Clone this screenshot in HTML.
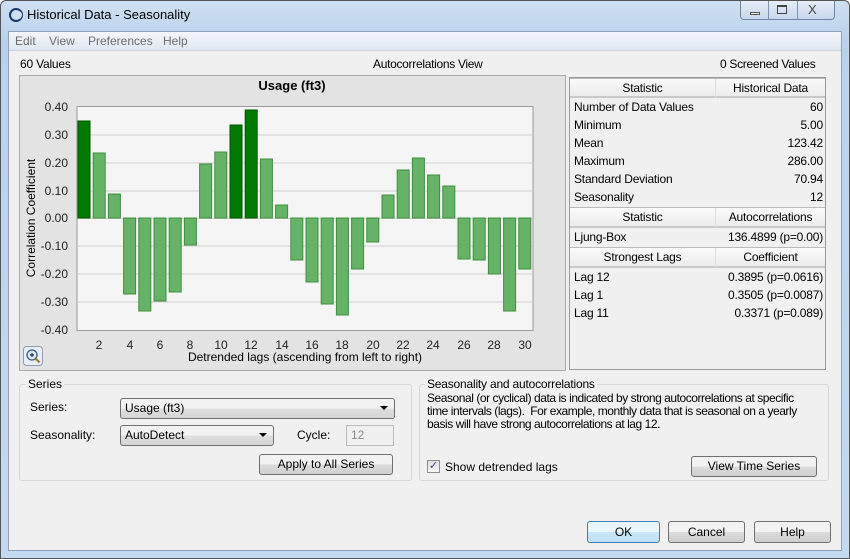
<!DOCTYPE html>
<html><head><meta charset="utf-8"><style>
*{margin:0;padding:0;box-sizing:border-box}
body{width:850px;height:559px;overflow:hidden;font-family:"Liberation Sans",sans-serif;font-size:12px;color:#000;background:#fff;position:relative}
.abs{position:absolute}
.win{left:0;top:0;width:850px;height:559px;background:linear-gradient(#cfe0f3,#b9d1ea 40px,#c4d9ef);border:1px solid #555;border-radius:6px 6px 0 0}
.client{left:8px;top:31px;width:834px;height:520px;background:#f0f0f0;border:1px solid #8aa2bd}
.menu{left:9px;top:32px;width:832px;height:19px;background:linear-gradient(#f3f6fa,#dfe7f1);border-bottom:1px solid #c8d3e0;color:#6d6d6d;font-size:12px}
.menu span{position:absolute;top:2px}
.tbl{left:569px;top:77px;width:257px;height:293px;background:#f0f0f0;border:1px solid #999}
.row{position:absolute;left:0;width:255px;height:18px;font-size:12px;line-height:18px;letter-spacing:-0.2px}
.row .l{position:absolute;left:4px}
.row .r{position:absolute;right:2px}
.hdr{background:linear-gradient(#fafafa,#ececec);border-bottom:2px solid #c9c9c9;border-top:1px solid #bbb}
.hdr .c1{position:absolute;left:0;width:145px;text-align:center}
.hdr .c2{position:absolute;left:145px;width:110px;text-align:center;border-left:1px solid #ddd}
.grp{border:1px solid #d8d8d8;border-radius:3px}
.btn{position:absolute;border:1px solid #707070;border-radius:3px;background:linear-gradient(#f2f2f2 50%,#dcdcdc 50%,#cfcfcf);text-align:center;font-size:12px}
.combo{position:absolute;border:1px solid #707070;border-radius:3px;background:linear-gradient(#f2f2f2 50%,#e0e0e0 50%,#d4d4d4);font-size:12px;padding-left:4px;line-height:18px}
.combo:after{content:"";position:absolute;right:6px;top:7px;border-left:4px solid transparent;border-right:4px solid transparent;border-top:4px solid #000}
</style></head><body>
<div class="abs win"></div>
<svg class="abs" style="left:8px;top:7px" width="16" height="16"><circle cx="8" cy="8" r="6" fill="none" stroke="#1a3a6a" stroke-width="2"/><circle cx="9.5" cy="8" r="4.5" fill="#cfe0f3"/></svg>
<div class="abs" style="left:27px;top:7px;font-size:13px">Historical Data - Seasonality</div>
<div class="abs" style="left:740px;top:1px;width:95px;height:19px;border:1px solid #6d83a0;border-top:none;border-radius:0 0 4px 4px;background:linear-gradient(#e6eef8,#c7d7ea)"></div>
<div class="abs" style="left:768px;top:1px;width:1px;height:19px;background:#7d92ae"></div>
<div class="abs" style="left:797px;top:1px;width:1px;height:19px;background:#7d92ae"></div>
<div class="abs" style="left:750px;top:12px;width:10px;height:3px;border:1px solid #555;background:#fff"></div>
<div class="abs" style="left:777px;top:5px;width:10px;height:9px;border:1px solid #444;border-top-width:2px"></div>
<div class="abs" style="left:808px;top:2px;font-size:13px;color:#444">X</div>
<div class="abs client"></div>
<div class="abs menu"><span style="left:6px">Edit</span><span style="left:40px">View</span><span style="left:79px">Preferences</span><span style="left:154px">Help</span></div>
<div class="abs" style="left:20px;top:57px;letter-spacing:-0.2px">60 Values</div>
<div class="abs" style="left:373px;top:57px;letter-spacing:-0.3px">Autocorrelations View</div>
<div class="abs" style="left:720px;top:57px;letter-spacing:-0.3px">0 Screened Values</div>

<div class="abs" style="left:19px;top:75px;width:547px;height:296px;background:#e3e3e3;border:1px solid #aaa"></div>
<svg class="abs" style="left:0;top:0" width="850" height="559" font-family="Liberation Sans,sans-serif">
<text x="292" y="90" font-size="13" font-weight="bold" text-anchor="middle">Usage (ft3)</text>
<rect x="77" y="106.5" width="456" height="224" fill="#f5f5f5" stroke="#999"/>
<g stroke="#d0d0d0"><line x1="78" x2="532" y1="135" y2="135"/><line x1="78" x2="532" y1="163" y2="163"/><line x1="78" x2="532" y1="191" y2="191"/><line x1="78" x2="532" y1="218.5" y2="218.5"/><line x1="78" x2="532" y1="246" y2="246"/><line x1="78" x2="532" y1="274" y2="274"/><line x1="78" x2="532" y1="302" y2="302"/></g>
<g font-size="12" fill="#222" text-anchor="end"><text x="68" y="111">0.40</text><text x="68" y="139">0.30</text><text x="68" y="167">0.20</text><text x="68" y="195">0.10</text><text x="68" y="222">0.00</text><text x="68" y="250">-0.10</text><text x="68" y="278">-0.20</text><text x="68" y="306">-0.30</text><text x="68" y="334">-0.40</text></g>
<text transform="translate(35,218) rotate(-90)" font-size="12" text-anchor="middle">Correlation Coefficient</text>
<g fill="#66b266" stroke="#3f8f3f">
<rect x="93.2" y="153" width="12" height="65"/><rect x="108.4" y="194" width="12" height="24"/>
<rect x="123.6" y="218" width="12" height="76"/><rect x="138.8" y="218" width="12" height="93"/><rect x="154" y="218" width="12" height="83"/><rect x="169.2" y="218" width="12" height="74"/><rect x="184.4" y="218" width="12" height="27"/>
<rect x="199.6" y="164" width="12" height="54"/><rect x="214.8" y="152" width="12" height="66"/>
<rect x="260.4" y="159" width="12" height="59"/><rect x="275.6" y="205" width="12" height="13"/>
<rect x="290.8" y="218" width="12" height="42"/><rect x="306" y="218" width="12" height="64"/><rect x="321.2" y="218" width="12" height="86"/><rect x="336.4" y="218" width="12" height="97"/><rect x="351.6" y="218" width="12" height="51"/><rect x="366.8" y="218" width="12" height="24"/>
<rect x="382" y="195" width="12" height="23"/><rect x="397.2" y="170" width="12" height="48"/><rect x="412.4" y="158" width="12" height="60"/><rect x="427.6" y="175" width="12" height="43"/><rect x="442.8" y="186" width="12" height="32"/>
<rect x="458" y="218" width="12" height="41"/><rect x="473.2" y="218" width="12" height="42"/><rect x="488.4" y="218" width="12" height="56"/><rect x="503.6" y="218" width="12" height="93"/><rect x="518.8" y="218" width="12" height="51"/>
</g>
<g fill="#007a00" stroke="#005500"><rect x="78" y="121" width="12" height="97"/><rect x="230" y="125" width="12" height="93"/><rect x="245.2" y="110" width="12" height="108"/></g>
<g font-size="12" fill="#222" text-anchor="middle"><text x="99" y="349">2</text><text x="130" y="349">4</text><text x="160" y="349">6</text><text x="190" y="349">8</text><text x="221" y="349">10</text><text x="251" y="349">12</text><text x="282" y="349">14</text><text x="312" y="349">16</text><text x="342" y="349">18</text><text x="373" y="349">20</text><text x="403" y="349">22</text><text x="433" y="349">24</text><text x="464" y="349">26</text><text x="494" y="349">28</text><text x="525" y="349">30</text></g>
<text x="305" y="361" font-size="12" text-anchor="middle">Detrended lags (ascending from left to right)</text>
<rect x="23.5" y="346.5" width="19" height="19" rx="3" fill="#e8eef5" stroke="#8a9ab0"/>
<circle cx="32" cy="355" r="5" fill="#dbe8f7" stroke="#3a5a8a" stroke-width="1.3"/><path d="M30 355h4M32 353v4" stroke="#234" stroke-width="1.2"/><path d="M35.5 358.5l4 4" stroke="#a67a2a" stroke-width="2.2"/>
</svg>

<div class="abs tbl">
<div class="row hdr" style="top:0;height:20px;line-height:19px"><span class="c1">Statistic</span><span class="c2">Historical Data</span></div>
<div class="row" style="top:20px"><span class="l">Number of Data Values</span><span class="r">60</span></div>
<div class="row" style="top:38px"><span class="l">Minimum</span><span class="r">5.00</span></div>
<div class="row" style="top:56px"><span class="l">Mean</span><span class="r">123.42</span></div>
<div class="row" style="top:74px"><span class="l">Maximum</span><span class="r">286.00</span></div>
<div class="row" style="top:92px"><span class="l">Standard Deviation</span><span class="r">70.94</span></div>
<div class="row" style="top:110px"><span class="l">Seasonality</span><span class="r">12</span></div>
<div class="row hdr" style="top:129px;height:21px;line-height:19px"><span class="c1">Statistic</span><span class="c2">Autocorrelations</span></div>
<div class="row" style="top:150px"><span class="l">Ljung-Box</span><span class="r">136.4899 (p=0.00)</span></div>
<div class="row hdr" style="top:169px;height:21px;line-height:19px"><span class="c1">Strongest Lags</span><span class="c2">Coefficient</span></div>
<div class="row" style="top:190px"><span class="l">Lag 12</span><span class="r">0.3895 (p=0.0616)</span></div>
<div class="row" style="top:208px"><span class="l">Lag 1</span><span class="r">0.3505 (p=0.0087)</span></div>
<div class="row" style="top:226px"><span class="l">Lag 11</span><span class="r">0.3371 (p=0.089)</span></div>
</div>

<div class="abs grp" style="left:19px;top:384px;width:393px;height:97px"></div>
<div class="abs" style="left:26px;top:377px;background:#f0f0f0;padding:0 2px">Series</div>
<div class="abs" style="left:30px;top:400px">Series:</div>
<div class="combo" style="left:120px;top:398px;width:275px;height:21px">Usage (ft3)</div>
<div class="abs" style="left:30px;top:428px">Seasonality:</div>
<div class="combo" style="left:120px;top:425px;width:154px;height:21px">AutoDetect</div>
<div class="abs" style="left:297px;top:428px">Cycle:</div>
<div class="abs" style="left:346px;top:425px;width:48px;height:21px;border:1px solid #bbb;background:#f0f0f0;color:#888;padding:2px 0 0 4px">12</div>
<div class="btn" style="left:259px;top:454px;width:134px;height:21px;line-height:19px">Apply to All Series</div>

<div class="abs grp" style="left:419px;top:384px;width:410px;height:97px"></div>
<div class="abs" style="left:425px;top:377px;background:#f0f0f0;padding:0 2px;letter-spacing:-0.2px">Seasonality and autocorrelations</div>
<div class="abs" style="left:427px;top:392px;width:400px;line-height:13px;letter-spacing:-0.45px">Seasonal (or cyclical) data is indicated by strong autocorrelations at specific<br>time intervals (lags).&nbsp; For example, monthly data that is seasonal on a yearly<br>basis will have strong autocorrelations at lag 12.</div>
<div class="abs" style="left:427px;top:460px;width:13px;height:13px;border:1px solid #8f8f8f;background:linear-gradient(#dcdcdc,#fafafa);font-size:11px;line-height:11px;text-align:center;color:#3a4a7a">✓</div>
<div class="abs" style="left:445px;top:460px">Show detrended lags</div>
<div class="btn" style="left:691px;top:456px;width:126px;height:21px;line-height:19px">View Time Series</div>

<div class="btn" style="left:587px;top:521px;width:73px;height:22px;line-height:20px;border-color:#3c7fb1;background:linear-gradient(#eaf6fd 50%,#c9e6f8 50%,#bee0f5)">OK</div>
<div class="btn" style="left:668px;top:521px;width:77px;height:22px;line-height:20px">Cancel</div>
<div class="btn" style="left:754px;top:521px;width:77px;height:22px;line-height:20px">Help</div>
</body></html>
